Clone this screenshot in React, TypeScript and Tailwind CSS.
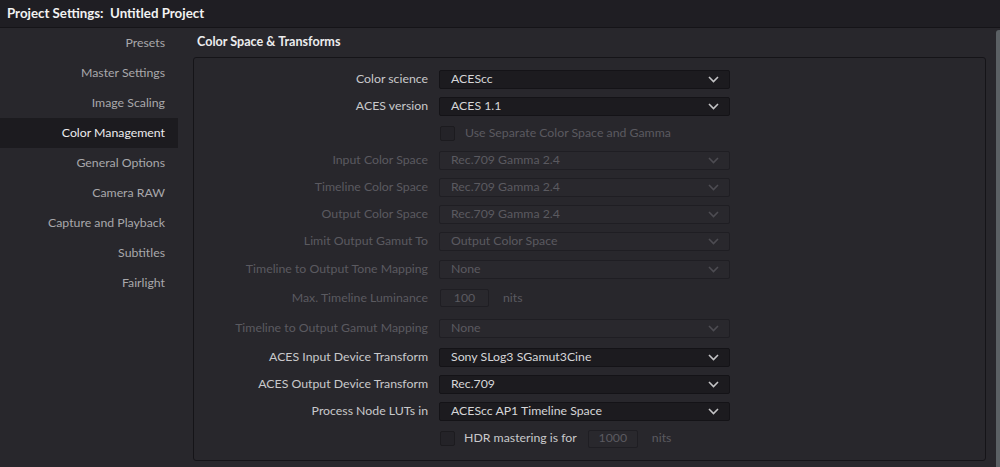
import React from 'react';

const FONT = { fontFamily: 'Lato, "Open Sans", "Liberation Sans", sans-serif' };

const NAV = [
  'Presets',
  'Master Settings',
  'Image Scaling',
  'Color Management',
  'General Options',
  'Camera RAW',
  'Capture and Playback',
  'Subtitles',
  'Fairlight',
];

type Row =
  | { kind: 'select'; label: string; value: string; off?: boolean; h: string }
  | { kind: 'check'; text: string; h: string }
  | { kind: 'nits'; label: string; value: string; h: string }
  | { kind: 'hdr'; h: string };

const ROWS: Row[] = [
  { kind: 'select', label: 'Color science', value: 'ACEScc', h: 'h-[27px]' },
  { kind: 'select', label: 'ACES version', value: 'ACES 1.1', h: 'h-[27px]' },
  { kind: 'check', text: 'Use Separate Color Space and Gamma', h: 'h-[27px]' },
  { kind: 'select', label: 'Input Color Space', value: 'Rec.709 Gamma 2.4', off: true, h: 'h-[27px]' },
  { kind: 'select', label: 'Timeline Color Space', value: 'Rec.709 Gamma 2.4', off: true, h: 'h-[27px]' },
  { kind: 'select', label: 'Output Color Space', value: 'Rec.709 Gamma 2.4', off: true, h: 'h-[27px]' },
  { kind: 'select', label: 'Limit Output Gamut To', value: 'Output Color Space', off: true, h: 'h-[27px]' },
  { kind: 'select', label: 'Timeline to Output Tone Mapping', value: 'None', off: true, h: 'h-[28px]' },
  { kind: 'nits', label: 'Max. Timeline Luminance', value: '100', h: 'h-[30px]' },
  { kind: 'select', label: 'Timeline to Output Gamut Mapping', value: 'None', off: true, h: 'h-[31px]' },
  { kind: 'select', label: 'ACES Input Device Transform', value: 'Sony SLog3 SGamut3Cine', h: 'h-[27px]' },
  { kind: 'select', label: 'ACES Output Device Transform', value: 'Rec.709', h: 'h-[27px]' },
  { kind: 'select', label: 'Process Node LUTs in', value: 'ACEScc AP1 Timeline Space', h: 'h-[27px]' },
  { kind: 'hdr', h: 'h-[27px]' },
];

const Chevron = ({ off }: { off?: boolean }) => (
  <svg width="11" height="7" viewBox="0 0 11 7" className="shrink-0">
    <path
      d="M1 1 L5.5 5.5 L10 1"
      fill="none"
      stroke={off ? '#4d4c52' : '#c4c4c6'}
      strokeWidth="1.6"
    />
  </svg>
);

const Label = ({ text, off }: { text: string; off?: boolean }) => (
  <div className={`w-[235px] shrink-0 text-right pr-[1px] ${off ? 'text-[#5b5a60]' : 'text-[#c9c9cb]'}`}>
    {text}
  </div>
);

const Box = () => (
  <div className="w-[15px] h-[15px] rounded-[2px] bg-[#242328] border border-[#1c1b1f]" />
);

const SettingRow = ({ row }: { row: Row }) => {
  if (row.kind === 'select') {
    return (
      <div className={`flex items-center gap-[10px] ${row.h}`}>
        <Label text={row.label} off={row.off} />
        <div
          className={`w-[291px] h-[19px] flex items-center justify-between pl-[11px] pr-[10px] rounded-[2px] border ${
            row.off
              ? 'bg-[#29282d] border-[#1f1e23] text-[#5b5a60]'
              : 'bg-[#1c1b1f] border-[#141317] text-[#d6d6d8]'
          }`}
        >
          <span>{row.value}</span>
          <Chevron off={row.off} />
        </div>
      </div>
    );
  }
  if (row.kind === 'check') {
    return (
      <div className={`flex items-center gap-[10px] ${row.h}`}>
        <div className="w-[235px] shrink-0" />
        <div className="flex items-center gap-[10px] pl-[1px]">
          <Box />
          <span className="text-[#5b5a60]">{row.text}</span>
        </div>
      </div>
    );
  }
  if (row.kind === 'nits') {
    return (
      <div className={`flex items-center gap-[10px] ${row.h}`}>
        <Label text={row.label} off />
        <div className="flex items-center gap-[14px] pl-[1px]">
          <div className="w-[49px] h-[18px] flex items-center justify-center rounded-[2px] bg-[#29282d] border border-[#1f1e23] text-[#5b5a60]">
            {row.value}
          </div>
          <span className="text-[#5b5a60]">nits</span>
        </div>
      </div>
    );
  }
  return (
    <div className={`flex items-center gap-[10px] ${row.h}`}>
      <div className="w-[235px] shrink-0" />
      <div className="flex items-center pl-[1px]">
        <Box />
        <span className="ml-[9px] text-[#c9c9cb]">HDR mastering is for</span>
        <div className="ml-[11px] w-[50px] h-[18px] flex items-center justify-center rounded-[2px] bg-[#29282d] border border-[#1f1e23] text-[#5b5a60]">
          1000
        </div>
        <span className="ml-[14px] text-[#5b5a60]">nits</span>
      </div>
    </div>
  );
};

export default function App() {
  return (
    <div style={FONT} className="w-[1000px] h-[467px] overflow-hidden bg-[#28272c] flex flex-col text-[12.3px] leading-none">
      <div className="h-[28px] shrink-0 bg-[#1f1e23] border-b border-[#151418] flex items-center pl-[7px]">
        <span className="text-[13.3px] font-bold text-[#f2f2f2]">Project Settings:&nbsp; Untitled Project</span>
      </div>
      <div className="flex flex-1 min-h-0">
        <div className="w-[178px] shrink-0 flex flex-col">
          {NAV.map((n) => (
            <div
              key={n}
              className={`h-[30px] flex items-center justify-end pr-[13px] ${
                n === 'Color Management' ? 'bg-[#1c1b1f] text-[#ececee]' : 'text-[#a8a8ab]'
              }`}
            >
              {n}
            </div>
          ))}
        </div>
        <div className="flex-1 flex flex-col pl-[15px] pr-[10px]">
          <div className="h-[29px] shrink-0 flex items-center pl-[4px] text-[#ececee] font-bold text-[12.6px]">
            Color Space &amp; Transforms
          </div>
          <div className="h-[404px] border border-[#151418] rounded-[3px] pt-[8px]">
            {ROWS.map((r, i) => (
              <SettingRow key={i} row={r} />
            ))}
          </div>
        </div>
        <div className="w-[4px] shrink-0 mt-[2px] bg-[#5b6064] rounded-tl-[3px]" />
      </div>
    </div>
  );
}
